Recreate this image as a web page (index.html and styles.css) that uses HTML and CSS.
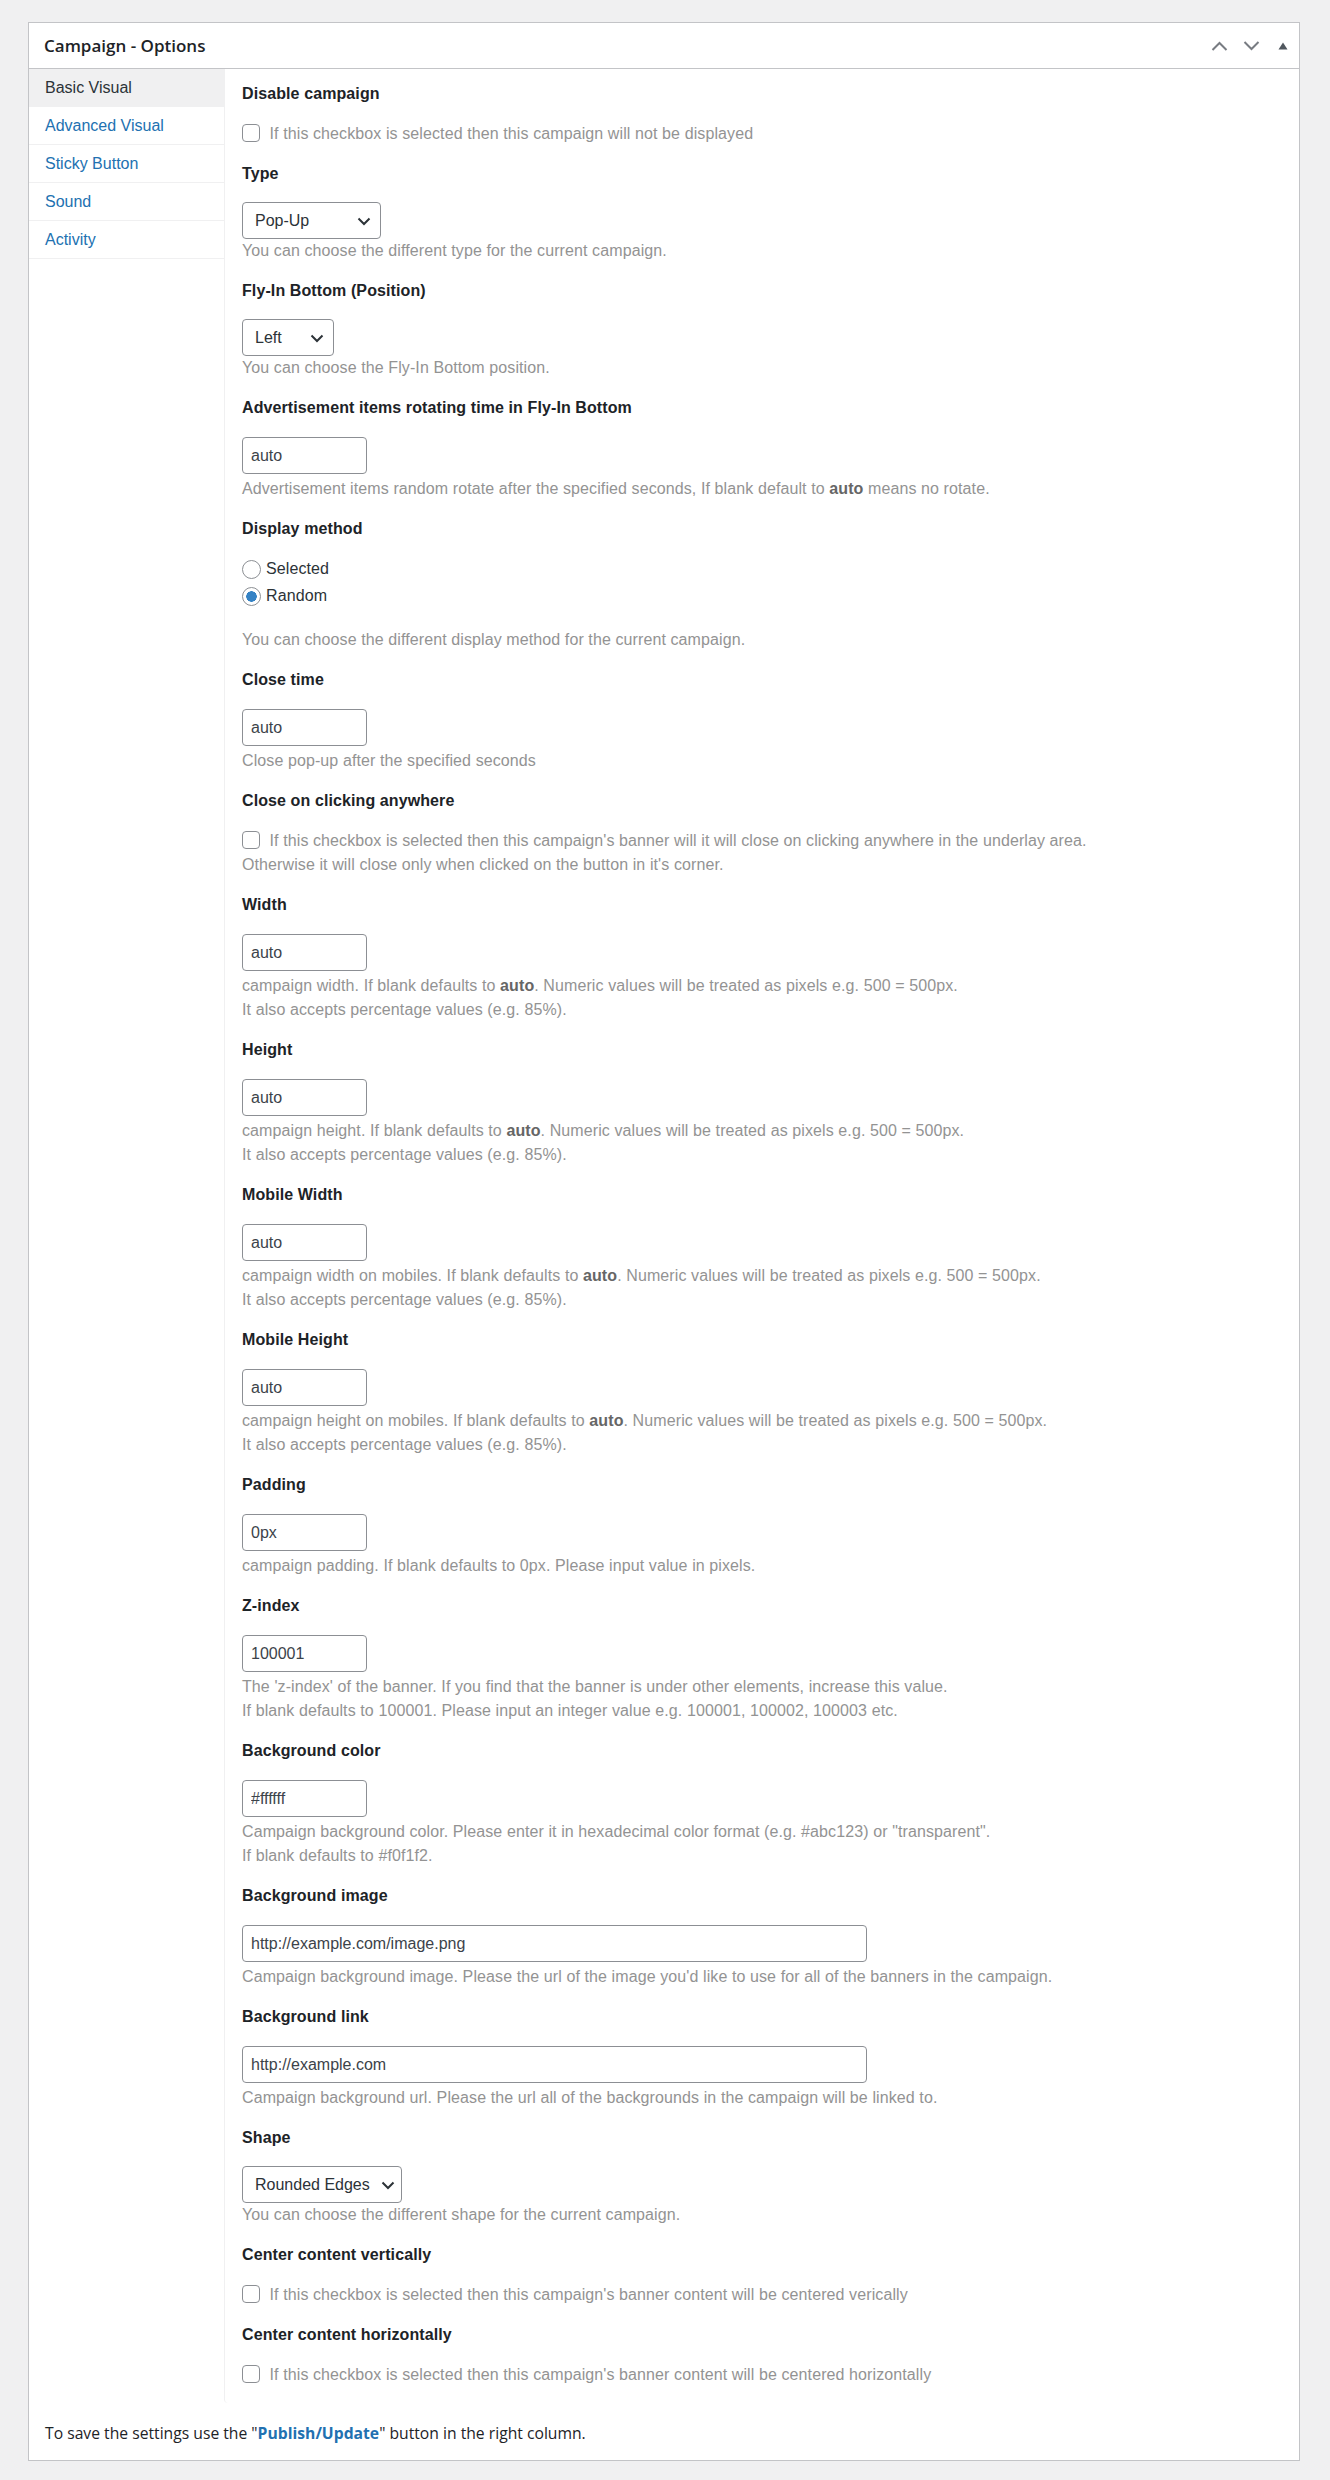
FILE: index.html
```html
<!DOCTYPE html>
<html lang="en">
<head>
    <meta charset="UTF-8">
    <meta name="viewport" content="width=device-width, initial-scale=1.0">
    <title>Campaign - Options</title>
    <link rel="stylesheet" href="styles.css">
</head>
<body>

    <div class="postbox">
        <!-- Box header -->
        <div class="postbox-header">
            <h2>Campaign - Options</h2>
            <div class="handle-actions">
                <button type="button" class="handle-btn" aria-label="Move up">
                    <svg width="17" height="10" viewBox="0 0 17 10"><path d="M1.5 9 8.5 2l7 7" fill="none" stroke="#787c82" stroke-width="2"/></svg>
                </button>
                <button type="button" class="handle-btn" aria-label="Move down">
                    <svg width="17" height="10" viewBox="0 0 17 10"><path d="M1.5 1l7 7 7-7" fill="none" stroke="#787c82" stroke-width="2"/></svg>
                </button>
                <button type="button" class="handle-btn" aria-label="Toggle panel">
                    <svg width="10" height="8" viewBox="0 0 10 8"><path d="M5 0.5 9.5 7.5H0.5z" fill="#50575e"/></svg>
                </button>
            </div>
        </div>

        <div class="postbox-inside">
            <div class="options-tabs">
                <!-- Tab navigation -->
                <ul class="tab-nav">
                    <li class="active"><a href="#">Basic Visual</a></li>
                    <li><a href="#">Advanced Visual</a></li>
                    <li><a href="#">Sticky Button</a></li>
                    <li><a href="#">Sound</a></li>
                    <li><a href="#">Activity</a></li>
                </ul>

                <!-- Basic Visual panel -->
                <div class="tab-panel">
                    <div class="field">
                        <label class="field-title" for="disable">Disable campaign</label>
                        <label class="check-row"><input type="checkbox" id="disable"> If this checkbox is selected then this campaign will not be displayed</label>
                    </div>

                    <div class="field">
                        <label class="field-title" for="type">Type</label>
                        <div class="select-wrap w-type">
                            <select id="type"><option>Pop-Up</option><option>Fly-In Bottom</option></select>
                            <svg class="select-arrow" width="14" height="9" viewBox="0 0 14 9"><path d="M1.5 1.5 7 7l5.5-5.5" fill="none" stroke="#2c3338" stroke-width="2"/></svg>
                        </div>
                        <p class="description">You can choose the different type for the current campaign.</p>
                    </div>

                    <div class="field">
                        <label class="field-title" for="flyin">Fly-In Bottom (Position)</label>
                        <div class="select-wrap w-left">
                            <select id="flyin"><option>Left</option><option>Right</option></select>
                            <svg class="select-arrow" width="14" height="9" viewBox="0 0 14 9"><path d="M1.5 1.5 7 7l5.5-5.5" fill="none" stroke="#2c3338" stroke-width="2"/></svg>
                        </div>
                        <p class="description">You can choose the Fly-In Bottom position.</p>
                    </div>

                    <div class="field">
                        <label class="field-title" for="rotate">Advertisement items rotating time in Fly-In Bottom</label>
                        <input type="text" class="text-input" id="rotate" value="auto">
                        <p class="description">Advertisement items random rotate after the specified seconds, If blank default to <strong>auto</strong> means no rotate.</p>
                    </div>

                    <div class="field">
                        <span class="field-title">Display method</span>
                        <div class="radio-group">
                            <label class="radio-row"><input type="radio" name="method"> Selected</label>
                            <label class="radio-row"><input type="radio" name="method" checked> Random</label>
                        </div>
                        <p class="description">You can choose the different display method for the current campaign.</p>
                    </div>

                    <div class="field">
                        <label class="field-title" for="closetime">Close time</label>
                        <input type="text" class="text-input" id="closetime" value="auto">
                        <p class="description">Close pop-up after the specified seconds</p>
                    </div>

                    <div class="field">
                        <label class="field-title" for="closeany">Close on clicking anywhere</label>
                        <label class="check-row"><input type="checkbox" id="closeany"> If this checkbox is selected then this campaign's banner will it will close on clicking anywhere in the underlay area.<br>Otherwise it will close only when clicked on the button in it's corner.</label>
                    </div>

                    <div class="field">
                        <label class="field-title" for="width">Width</label>
                        <input type="text" class="text-input" id="width" value="auto">
                        <p class="description">campaign width. If blank defaults to <strong>auto</strong>. Numeric values will be treated as pixels e.g. 500 = 500px.<br>It also accepts percentage values (e.g. 85%).</p>
                    </div>

                    <div class="field">
                        <label class="field-title" for="height">Height</label>
                        <input type="text" class="text-input" id="height" value="auto">
                        <p class="description">campaign height. If blank defaults to <strong>auto</strong>. Numeric values will be treated as pixels e.g. 500 = 500px.<br>It also accepts percentage values (e.g. 85%).</p>
                    </div>

                    <div class="field">
                        <label class="field-title" for="mwidth">Mobile Width</label>
                        <input type="text" class="text-input" id="mwidth" value="auto">
                        <p class="description">campaign width on mobiles. If blank defaults to <strong>auto</strong>. Numeric values will be treated as pixels e.g. 500 = 500px.<br>It also accepts percentage values (e.g. 85%).</p>
                    </div>

                    <div class="field">
                        <label class="field-title" for="mheight">Mobile Height</label>
                        <input type="text" class="text-input" id="mheight" value="auto">
                        <p class="description">campaign height on mobiles. If blank defaults to <strong>auto</strong>. Numeric values will be treated as pixels e.g. 500 = 500px.<br>It also accepts percentage values (e.g. 85%).</p>
                    </div>

                    <div class="field">
                        <label class="field-title" for="padding">Padding</label>
                        <input type="text" class="text-input" id="padding" value="0px">
                        <p class="description">campaign padding. If blank defaults to 0px. Please input value in pixels.</p>
                    </div>

                    <div class="field">
                        <label class="field-title" for="zindex">Z-index</label>
                        <input type="text" class="text-input" id="zindex" value="100001">
                        <p class="description">The 'z-index' of the banner. If you find that the banner is under other elements, increase this value.<br>If blank defaults to 100001. Please input an integer value e.g. 100001, 100002, 100003 etc.</p>
                    </div>

                    <div class="field">
                        <label class="field-title" for="bgcolor">Background color</label>
                        <input type="text" class="text-input" id="bgcolor" value="#ffffff">
                        <p class="description">Campaign background color. Please enter it in hexadecimal color format (e.g. #abc123) or "transparent".<br>If blank defaults to #f0f1f2.</p>
                    </div>

                    <div class="field">
                        <label class="field-title" for="bgimage">Background image</label>
                        <input type="text" class="text-input wide" id="bgimage" value="http://example.com/image.png">
                        <p class="description">Campaign background image. Please the url of the image you'd like to use for all of the banners in the campaign.</p>
                    </div>

                    <div class="field">
                        <label class="field-title" for="bglink">Background link</label>
                        <input type="text" class="text-input wide" id="bglink" value="http://example.com">
                        <p class="description">Campaign background url. Please the url all of the backgrounds in the campaign will be linked to.</p>
                    </div>

                    <div class="field">
                        <label class="field-title" for="shape">Shape</label>
                        <div class="select-wrap w-shape">
                            <select id="shape"><option>Rounded Edges</option><option>Square</option></select>
                            <svg class="select-arrow" width="14" height="9" viewBox="0 0 14 9"><path d="M1.5 1.5 7 7l5.5-5.5" fill="none" stroke="#2c3338" stroke-width="2"/></svg>
                        </div>
                        <p class="description">You can choose the different shape for the current campaign.</p>
                    </div>

                    <div class="field">
                        <label class="field-title" for="centerv">Center content vertically</label>
                        <label class="check-row"><input type="checkbox" id="centerv"> If this checkbox is selected then this campaign's banner content will be centered verically</label>
                    </div>

                    <div class="field">
                        <label class="field-title" for="centerh">Center content horizontally</label>
                        <label class="check-row"><input type="checkbox" id="centerh"> If this checkbox is selected then this campaign's banner content will be centered horizontally</label>
                    </div>
                </div>
            </div>

            <!-- Save note -->
            <p class="save-note">To save the settings use the "<a href="#">Publish/Update</a>" button in the right column.</p>
        </div>
    </div>

</body>
</html>
```

FILE: styles.css
```css
/* Page */
body {
    margin: 0;
    padding: 22px 30px 20px 28px;
    background-color: #f0f0f1;
    font-family: "Liberation Sans", Arial, sans-serif;
    font-size: 16px;
    color: #2c3338;
}

/* Outer box */
.postbox {
    background-color: #fff;
    border: 1px solid #c3c4c7;
}

.postbox-header {
    display: flex;
    align-items: center;
    justify-content: space-between;
    height: 45px;
    border-bottom: 1px solid #c3c4c7;
}

.postbox-header h2 {
    margin: 0;
    padding-left: 15px;
    font-family: "Open Sans", "Noto Sans", sans-serif;
    font-size: 17px;
    font-weight: 600;
    color: #1d2327;
}

.handle-actions {
    display: flex;
    height: 100%;
}

.handle-btn {
    width: 32px;
    height: 100%;
    padding: 0;
    border: none;
    background: none;
    display: flex;
    align-items: center;
    justify-content: center;
    cursor: pointer;
}

/* Tabs layout */
.options-tabs {
    display: flex;
}

.tab-nav {
    width: 195px;
    flex-shrink: 0;
    margin: 0;
    padding: 0;
    list-style: none;
}

.tab-nav li {
    height: 37px;
    border-bottom: 1px solid #f0f0f1;
    display: flex;
    align-items: center;
    padding-left: 16px;
}

.tab-nav a {
    color: #2271b1;
    text-decoration: none;
    font-size: 16px;
}

.tab-nav li.active {
    background-color: #f0f0f1;
}

.tab-nav li.active a {
    color: #2c3338;
}

.tab-panel {
    flex: 1;
    padding: 13px 0 0 17px;
    border-left: 1px solid #f0f0f1;
    border-bottom-left-radius: 4px;
    letter-spacing: 0.1px;
}

/* Fields - flex column so the margins add up instead of collapsing */
.field {
    display: flex;
    flex-direction: column;
    align-items: flex-start;
    margin-bottom: 16px;
}

.field-title {
    display: block;
    margin-bottom: 16px;
    font-weight: bold;
    font-size: 16px;
    line-height: 24px;
    color: #1d2327;
}

.description {
    margin: 0;
    font-size: 16px;
    line-height: 24px;
    color: #939393;
}

.description strong {
    color: #666;
}

/* Text inputs */
.text-input {
    display: block;
    box-sizing: border-box;
    width: 125px;
    height: 37px;
    margin: 1px 0 3px;
    padding: 0 8px;
    border: 1px solid #8c8f94;
    border-radius: 4px;
    font-family: "Liberation Sans", Arial, sans-serif;
    font-size: 16px;
    color: #3c434a;
}

.text-input.wide {
    width: 625px;
}

/* Selects */
.select-wrap {
    position: relative;
}

.select-wrap select {
    box-sizing: border-box;
    width: 100%;
    height: 37px;
    padding: 0 28px 0 12px;
    border: 1px solid #8c8f94;
    border-radius: 4px;
    background: #fff;
    font-family: "Liberation Sans", Arial, sans-serif;
    font-size: 16px;
    color: #2c3338;
    appearance: none;
    -webkit-appearance: none;
    display: block;
}

.select-arrow {
    position: absolute;
    right: 10px;
    top: 15px;
    pointer-events: none;
}

.w-type { width: 139px; }
.w-left { width: 92px; }
.w-shape { width: 160px; }

.w-shape .select-arrow { right: 7px; }

/* Checkboxes */
.check-row {
    display: block;
    line-height: 24px;
    color: #939393;
}

.check-row input[type="checkbox"] {
    appearance: none;
    -webkit-appearance: none;
    box-sizing: border-box;
    width: 18px;
    height: 18px;
    margin: 0 5px 0 0;
    border: 1px solid #8c8f94;
    border-radius: 4px;
    background: #fff;
    vertical-align: -3px;
}

/* Radios */
.radio-group {
    margin-bottom: 20px;
}

.radio-row {
    display: flex;
    align-items: center;
    gap: 5px;
    height: 24px;
    margin-bottom: 3px;
    color: #2c3338;
}

.radio-row:last-child {
    margin-bottom: 0;
}

.radio-row input[type="radio"] {
    appearance: none;
    -webkit-appearance: none;
    box-sizing: border-box;
    width: 19px;
    height: 19px;
    margin: 0;
    border: 1px solid #8c8f94;
    border-radius: 50%;
    background: #fff;
}

.radio-row input[type="radio"]:checked {
    background: radial-gradient(circle, #3582c4 0 5px, #fff 5.5px);
}

/* Save note */
.save-note {
    margin: 0;
    padding: 20px 16px 16px;
    font-family: "Open Sans", "Noto Sans", sans-serif;
    font-size: 15.7px;
    line-height: 21px;
    color: #1d2327;
}

.save-note a {
    color: #2271b1;
    font-weight: bold;
    text-decoration: none;
}
```
